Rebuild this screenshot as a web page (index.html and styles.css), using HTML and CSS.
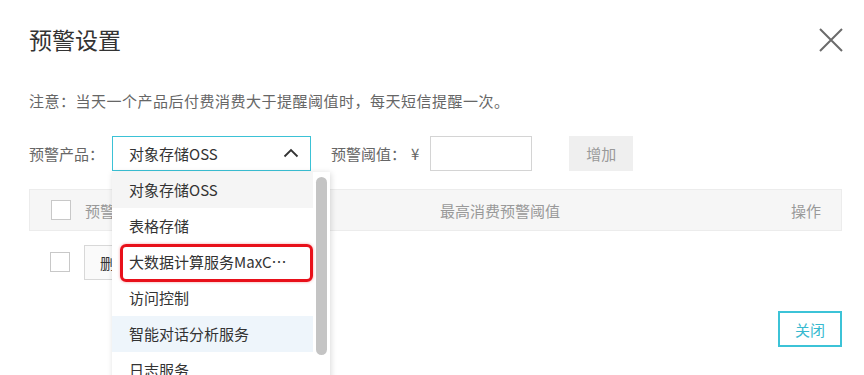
FILE: index.html
```html
<!DOCTYPE html>
<html lang="zh-CN">
  <head>
    <meta charset="UTF-8" />
    <meta name="viewport" content="width=device-width, initial-scale=1.0" />
    <title>预警设置</title>
    <link rel="stylesheet" href="styles.css">
  </head>
  <body>
    <div class="dialog">
      <div class="header">
        <h2>预警设置</h2>
        <button class="close-btn" aria-label="关闭">
          <svg width="26" height="26" viewBox="0 0 26 26">
            <path d="M2 2 L24 24 M24 2 L2 24" stroke="#6b6b6b" stroke-width="2" fill="none" />
          </svg>
        </button>
      </div>

      <p class="notice">注意：当天一个产品后付费消费大于提醒阈值时，每天短信提醒一次。</p>

      <div class="form-row">
        <label class="label">预警产品：</label>
        <div class="select-wrap">
          <div class="select open">
            <span>对象存储OSS</span>
            <svg class="chevron" width="16" height="10" viewBox="0 0 16 10">
              <path d="M1.5 8.5 L8 2 L14.5 8.5" stroke="#333" stroke-width="1.8" fill="none" />
            </svg>
          </div>
          <div class="dropdown">
            <ul class="options">
              <li class="selected"><span class="text">对象存储OSS</span></li>
              <li><span class="text">表格存储</span></li>
              <li class="marked"><span class="text">大数据计算服务MaxCompute</span></li>
              <li><span class="text">访问控制</span></li>
              <li class="hover"><span class="text">智能对话分析服务</span></li>
              <li><span class="text">日志服务</span></li>
              <li><span class="text">消息服务</span></li>
            </ul>
            <div class="scrollbar"><div class="thumb"></div></div>
          </div>
        </div>
        <label class="label label-amount">预警阈值：<span class="yen">¥</span></label>
        <input class="amount" type="text" />
        <button class="add-btn">增加</button>
      </div>

      <div class="table">
        <div class="table-head">
          <div class="cell"><span class="checkbox"></span></div>
          <div class="cell">预警产品</div>
          <div class="cell center">最高消费预警阈值</div>
          <div class="cell right">操作</div>
        </div>
        <div class="table-row">
          <div class="cell"><span class="checkbox"></span></div>
          <div class="cell"><button class="del-btn">删除</button></div>
        </div>
      </div>

      <div class="footer">
        <button class="close-text-btn">关闭</button>
      </div>
    </div>
  </body>
</html>
```

FILE: styles.css
```css
body {
  margin: 0;
  font-family: "Noto Sans CJK SC", "Noto Sans", sans-serif;
  background: #fff;
  color: #333;
  overflow: hidden;
  height: 375px;
}
.dialog {
  padding: 0 22px 0 29px;
}
.header {
  display: flex;
  justify-content: space-between;
  align-items: center;
  padding-top: 23px;
}
.header h2 {
  margin: 0;
  font-size: 23px;
  font-weight: normal;
  line-height: 32px;
  color: #333;
}
.close-btn {
  border: none;
  background: none;
  padding: 0;
  width: 26px;
  height: 26px;
  margin-right: -2px;
  margin-top: 2px;
}
.notice {
  margin: 35px 0 0;
  font-size: 15px;
  line-height: 22px;
  color: #666;
  letter-spacing: 0.5px;
}
.form-row {
  display: flex;
  align-items: center;
  margin-top: 24px;
  height: 35px;
}
.label {
  font-size: 15px;
  color: #666;
  width: 83px;
  flex-shrink: 0;
}
.label-amount {
  width: auto;
  margin-right: 11px;
}
.yen {
  margin-left: 5px;
}
.select-wrap {
  position: relative;
  margin-right: 20px;
}
.select {
  box-sizing: border-box;
  width: 199px;
  height: 35px;
  border: 1px solid #3bc2d6;
  display: flex;
  align-items: center;
  justify-content: space-between;
  padding: 0 11px 0 16px;
  font-size: 15px;
  color: #333;
}
.chevron {
  margin-top: -2px;
}
.dropdown {
  position: absolute;
  top: 36px;
  left: 0;
  width: 218px;
  height: 240px;
  background: #fff;
  display: flex;
  box-shadow: 1px 1px 6px rgba(0, 0, 0, 0.15);
  z-index: 2;
}
.options {
  list-style: none;
  margin: 0;
  padding: 0;
  width: 201px;
}
.options li {
  position: relative;
  height: 36px;
  line-height: 36px;
  padding: 0 19px 0 17px;
  font-size: 15px;
  color: #333;
}
.options .text {
  display: block;
  white-space: nowrap;
  overflow: hidden;
  text-overflow: ellipsis;
}
.options li.selected {
  background: #f5f5f5;
}
.options li.hover {
  background: #eef5fb;
}
.options li.marked::after {
  content: "";
  position: absolute;
  left: 8px;
  right: 0;
  top: 0;
  bottom: -2px;
  border: 3px solid #e8101a;
  border-radius: 6px;
  box-shadow: 0 0 3px rgba(232, 16, 26, 0.4);
}
.scrollbar {
  width: 17px;
  padding: 5px 3px;
  box-sizing: border-box;
}
.thumb {
  width: 11px;
  height: 178px;
  background: #c4c4c4;
  border-radius: 6px;
}
.amount {
  box-sizing: border-box;
  width: 102px;
  height: 35px;
  border: 1px solid #d4d4d4;
  margin: 0 37px 0 0;
  padding: 0 8px;
  font-size: 15px;
  outline: none;
}
.add-btn {
  width: 64px;
  height: 35px;
  border: none;
  background: #efefef;
  color: #999;
  font-family: inherit;
  font-size: 15px;
}
.table {
  margin-top: 18px;
}
.table-head,
.table-row {
  display: grid;
  grid-template-columns: 55px 230px 370px 157px;
  align-items: center;
}
.table-head {
  height: 42px;
  box-sizing: border-box;
  background: #f6f6f6;
  border: 1px solid #ececec;
  color: #999;
  font-size: 15px;
}
.table-row {
  height: 62px;
}
.cell.center {
  text-align: center;
}
.cell.right {
  text-align: right;
  padding-right: 21px;
}
.checkbox {
  display: block;
  box-sizing: border-box;
  width: 20px;
  height: 20px;
  margin-left: 21px;
  border: 1px solid #c8c8c8;
  background: #fff;
}
.del-btn {
  height: 35px;
  padding: 0 15px;
  border: 1px solid #d8d8d8;
  background: #fafafa;
  color: #333;
  font-family: inherit;
  font-size: 15px;
}
.footer {
  display: flex;
  justify-content: flex-end;
  margin-top: 18px;
}
.close-text-btn {
  width: 64px;
  height: 36px;
  border: 2px solid #3cc3d7;
  background: #fff;
  color: #37b9cf;
  font-family: inherit;
  font-size: 15px;
}
```
